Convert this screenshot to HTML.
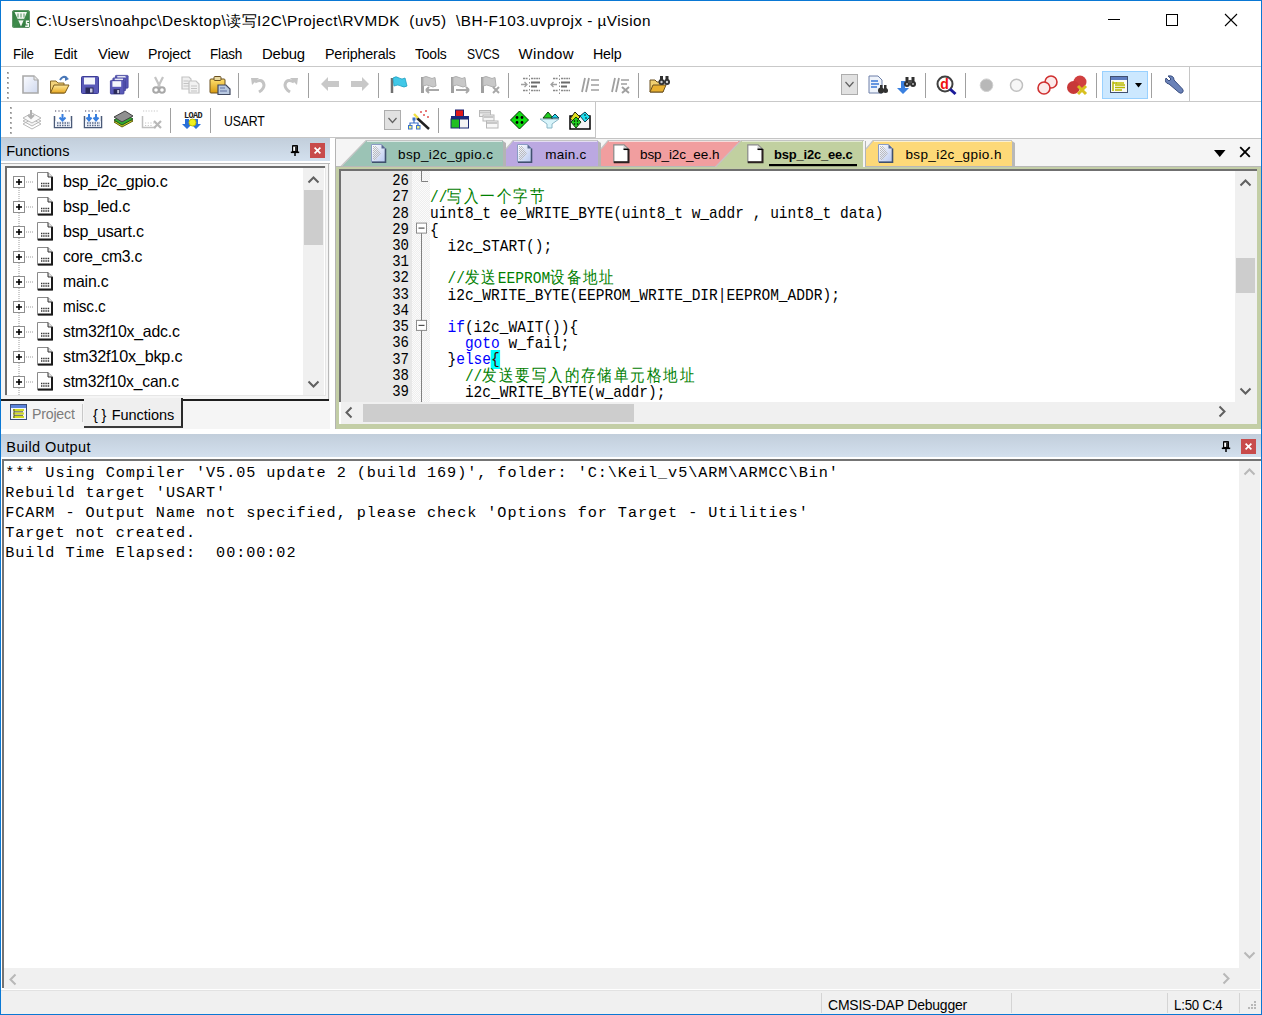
<!DOCTYPE html>
<html><head><meta charset="utf-8"><style>*{margin:0;padding:0;box-sizing:border-box}
html,body{width:1262px;height:1015px;overflow:hidden;background:#fff}
body{position:relative;font-family:"Liberation Sans",sans-serif;color:#000}
.a{position:absolute}
svg.a{overflow:visible}
.t{white-space:pre;line-height:0}
.code{font-family:"Liberation Mono",monospace;font-size:17.0px;letter-spacing:0;transform:scaleX(0.8549);transform-origin:0 0;white-space:pre;line-height:0;color:#000}
.cj{display:inline-block;width:19.242px;letter-spacing:0;font-size:17px;line-height:0}
.ca{}
.lnum{font-family:"Liberation Mono",monospace;font-size:16.5px;letter-spacing:0;transform:scaleX(0.85);transform-origin:100% 0;text-align:right;white-space:pre;line-height:0;color:#000}
.bout{font-family:"Liberation Mono",monospace;font-size:15.2px;letter-spacing:0.930px;white-space:pre;line-height:0;color:#000}
</style></head><body>
<svg class="a" style="left:12px;top:10px;" width="18" height="18" viewBox="0 0 18 18"><defs><linearGradient id="gi" x1="0" y1="0" x2="1" y2="1"><stop offset="0" stop-color="#2f7a3e"/><stop offset="0.5" stop-color="#3f8c4c"/><stop offset="1" stop-color="#2a7038"/></linearGradient></defs>
<rect x="0" y="0" width="18" height="18" rx="2.5" fill="url(#gi)"/><rect x="0.5" y="0.5" width="17" height="17" rx="2.2" fill="none" stroke="#6a9a72" stroke-width="0.8"/>
<path d="M2.5 2 H15 L9 16.5 Z" fill="#f4faf4"/>
<path d="M6 3.5 V7.5 M9 3.5 V7.5 M12 3.5 V7.5" stroke="#7aa882" stroke-width="1.3"/>
<path d="M5 9.6 H13.5" stroke="#4a8a56" stroke-width="1.6"/>
<path d="M13.8 10.5 H17 V12 H15.2 V13 H17 V17 H13.2 V15.5 H15.6 V14.4 H13.8 Z" fill="#f4faf4"/></svg>
<svg class="a" style="left:1100px;top:8px;" width="150" height="24" viewBox="0 0 150 24"><path d="M8 11.5 H20" stroke="#000" stroke-width="1"/>
<rect x="66.5" y="6.5" width="11" height="11" fill="none" stroke="#000" stroke-width="1"/>
<path d="M125 6 L137 18 M137 6 L125 18" stroke="#000" stroke-width="1.1"/></svg>
<div class="a" style="left:1px;top:66px;width:1260px;height:1px;background:#c9c9c9;"></div>
<div class="a" style="left:2px;top:67px;width:1188px;height:35px;background:#fff;border-right:1px solid #c6c6c6;border-bottom:1px solid #c6c6c6"></div>
<div class="a" style="left:1px;top:101px;width:1260px;height:1px;background:#c9c9c9;"></div>
<div class="a" style="left:5px;top:102px;width:591px;height:36px;background:#fff;border-right:1px solid #c6c6c6;border-bottom:1px solid #c6c6c6"></div>
<div class="a" style="left:596px;top:138px;width:665px;height:1px;background:#c9c9c9;"></div>
<div class="a" style="left:1px;top:137px;width:4px;height:1px;background:#c9c9c9;"></div>
<svg class="a" style="left:7px;top:72px;" width="3" height="28" viewBox="0 0 3 28"><rect x="0" y="0" width="2" height="2" fill="#b4b4b4"/><rect x="0" y="0" width="1" height="1" fill="#8c8c8c"/><rect x="0" y="5" width="2" height="2" fill="#b4b4b4"/><rect x="0" y="5" width="1" height="1" fill="#8c8c8c"/><rect x="0" y="10" width="2" height="2" fill="#b4b4b4"/><rect x="0" y="10" width="1" height="1" fill="#8c8c8c"/><rect x="0" y="15" width="2" height="2" fill="#b4b4b4"/><rect x="0" y="15" width="1" height="1" fill="#8c8c8c"/><rect x="0" y="20" width="2" height="2" fill="#b4b4b4"/><rect x="0" y="20" width="1" height="1" fill="#8c8c8c"/><rect x="0" y="25" width="2" height="2" fill="#b4b4b4"/><rect x="0" y="25" width="1" height="1" fill="#8c8c8c"/></svg>
<svg class="a" style="left:10px;top:107px;" width="3" height="28" viewBox="0 0 3 28"><rect x="0" y="0" width="2" height="2" fill="#b4b4b4"/><rect x="0" y="0" width="1" height="1" fill="#8c8c8c"/><rect x="0" y="5" width="2" height="2" fill="#b4b4b4"/><rect x="0" y="5" width="1" height="1" fill="#8c8c8c"/><rect x="0" y="10" width="2" height="2" fill="#b4b4b4"/><rect x="0" y="10" width="1" height="1" fill="#8c8c8c"/><rect x="0" y="15" width="2" height="2" fill="#b4b4b4"/><rect x="0" y="15" width="1" height="1" fill="#8c8c8c"/><rect x="0" y="20" width="2" height="2" fill="#b4b4b4"/><rect x="0" y="20" width="1" height="1" fill="#8c8c8c"/><rect x="0" y="25" width="2" height="2" fill="#b4b4b4"/><rect x="0" y="25" width="1" height="1" fill="#8c8c8c"/></svg>
<div class="a" style="left:138px;top:73px;width:1px;height:25px;background:#a0a0a0;"></div>
<div class="a" style="left:238px;top:73px;width:1px;height:25px;background:#a0a0a0;"></div>
<div class="a" style="left:308px;top:73px;width:1px;height:25px;background:#a0a0a0;"></div>
<div class="a" style="left:378px;top:73px;width:1px;height:25px;background:#a0a0a0;"></div>
<div class="a" style="left:508px;top:73px;width:1px;height:25px;background:#a0a0a0;"></div>
<div class="a" style="left:638px;top:73px;width:1px;height:25px;background:#a0a0a0;"></div>
<div class="a" style="left:925px;top:73px;width:1px;height:25px;background:#a0a0a0;"></div>
<div class="a" style="left:965px;top:73px;width:1px;height:25px;background:#a0a0a0;"></div>
<div class="a" style="left:1096px;top:73px;width:1px;height:25px;background:#a0a0a0;"></div>
<div class="a" style="left:1151px;top:73px;width:1px;height:25px;background:#a0a0a0;"></div>
<div class="a" style="left:170px;top:108px;width:1px;height:25px;background:#a0a0a0;"></div>
<div class="a" style="left:210px;top:108px;width:1px;height:25px;background:#a0a0a0;"></div>
<div class="a" style="left:438px;top:108px;width:1px;height:25px;background:#a0a0a0;"></div>
<svg class="a" style="left:22px;top:75px;" width="17" height="19" viewBox="0 0 17 19"><defs><linearGradient id="gn" x1="0" y1="0" x2="1" y2="1"><stop offset="0" stop-color="#fbfcff"/><stop offset="1" stop-color="#cfd8ee"/></linearGradient></defs>
<path d="M1 1 H12 L16 5 V18 H1 Z" fill="url(#gn)" stroke="#a9a9a9" stroke-width="1.6"/><path d="M12 1 V5 H16" fill="#e8e8e8" stroke="#a9a9a9" stroke-width="1"/></svg>
<svg class="a" style="left:49px;top:75px;" width="22" height="20" viewBox="0 0 22 20"><defs><linearGradient id="go" x1="0" y1="0" x2="0" y2="1"><stop offset="0" stop-color="#ffe89a"/><stop offset="1" stop-color="#e8a820"/></linearGradient></defs>
<path d="M1.5 6 H7 L9 8 H15 V18 H1.5 Z" fill="#f3d27a" stroke="#8a6a2a" stroke-width="1"/>
<path d="M1.5 18 L5 10 H20 L16 18 Z" fill="url(#go)" stroke="#7a5a1a" stroke-width="1"/>
<path d="M11 5 Q14 0 18 3" fill="none" stroke="#4a78b8" stroke-width="2"/><path d="M16 1 L20 4 L16 6 Z" fill="#4a78b8"/></svg>
<svg class="a" style="left:81px;top:76px;" width="18" height="18" viewBox="0 0 18 18"><g transform="translate(0,0) scale(1)"><rect x="0.5" y="0.5" width="17" height="17" rx="1" fill="#5a5ab8" stroke="#3c3c96"/>
<rect x="3" y="1.5" width="11" height="7" fill="#f4f6fb"/><rect x="4.5" y="11.5" width="8" height="6" fill="#2a2a5a"/><rect x="9" y="12.5" width="2.5" height="4" fill="#c8c8e0"/></g></svg>
<svg class="a" style="left:110px;top:75px;" width="20" height="20" viewBox="0 0 20 20"><g><g transform="translate(5,0) scale(0.75)"><rect x="0.5" y="0.5" width="17" height="17" rx="1" fill="#5a5ab8" stroke="#3c3c96"/>
<rect x="3" y="1.5" width="11" height="7" fill="#f4f6fb"/><rect x="4.5" y="11.5" width="8" height="6" fill="#2a2a5a"/><rect x="9" y="12.5" width="2.5" height="4" fill="#c8c8e0"/></g><g transform="translate(2.5,2.5) scale(0.75)"><rect x="0.5" y="0.5" width="17" height="17" rx="1" fill="#5a5ab8" stroke="#3c3c96"/>
<rect x="3" y="1.5" width="11" height="7" fill="#f4f6fb"/><rect x="4.5" y="11.5" width="8" height="6" fill="#2a2a5a"/><rect x="9" y="12.5" width="2.5" height="4" fill="#c8c8e0"/></g><g transform="translate(0,5) scale(0.8)"><rect x="0.5" y="0.5" width="17" height="17" rx="1" fill="#5a5ab8" stroke="#3c3c96"/>
<rect x="3" y="1.5" width="11" height="7" fill="#f4f6fb"/><rect x="4.5" y="11.5" width="8" height="6" fill="#2a2a5a"/><rect x="9" y="12.5" width="2.5" height="4" fill="#c8c8e0"/></g></g></svg>
<svg class="a" style="left:152px;top:76px;" width="14" height="18" viewBox="0 0 14 18"><path d="M3 1 L8 11 M11 1 L6 11" stroke="#c4c4c4" stroke-width="2.2"/><circle cx="4" cy="14" r="2.8" fill="none" stroke="#a8a8a8" stroke-width="2"/><circle cx="10" cy="14" r="2.8" fill="none" stroke="#a8a8a8" stroke-width="2"/></svg>
<svg class="a" style="left:181px;top:76px;" width="20" height="18" viewBox="0 0 20 18"><path d="M1 1 H8 L10 3 V13 H1 Z" fill="#f0f0f0" stroke="#c4c4c4" stroke-width="1.2"/><path d="M2.5 5 H7 M2.5 7.5 H8 M2.5 10 H8" stroke="#c4c4c4"/>
<path d="M8 5 H15 L18 8 V17 H8 Z" fill="#f2f2f2" stroke="#c4c4c4" stroke-width="1.2"/><path d="M10 10 H16 M10 12.5 H16 M10 15 H16" stroke="#c4c4c4"/></svg>
<svg class="a" style="left:209px;top:76px;" width="22" height="19" viewBox="0 0 22 19"><defs><linearGradient id="gp" x1="0" y1="0" x2="0" y2="1"><stop offset="0" stop-color="#ffe070"/><stop offset="1" stop-color="#d89a10"/></linearGradient></defs>
<rect x="1" y="3" width="15" height="14" rx="1" fill="url(#gp)" stroke="#6a5020" stroke-width="1"/><rect x="5" y="0.5" width="7" height="4" rx="1" fill="#e8d8a0" stroke="#6a5020"/>
<path d="M9 9 H17 L21 13 V18.5 H9 Z" fill="#b8c8e0" stroke="#404860" stroke-width="1.2"/><path d="M11 12 H16 M11 15 H18" stroke="#6070a0"/></svg>
<svg class="a" style="left:251px;top:77px;" width="17" height="16" viewBox="0 0 17 16"><path d="M4 5 Q12 1 13 8 Q13 12 8 15" fill="none" stroke="#c4c4c4" stroke-width="3"/><path d="M0 1 L8 1 L1 8 Z" fill="#c4c4c4"/></svg>
<svg class="a" style="left:281px;top:77px;" width="17" height="16" viewBox="0 0 17 16"><path d="M13 5 Q5 1 4 8 Q4 12 9 15" fill="none" stroke="#c4c4c4" stroke-width="3"/><path d="M17 1 L9 1 L16 8 Z" fill="#c4c4c4"/></svg>
<svg class="a" style="left:321px;top:77px;" width="18" height="14" viewBox="0 0 18 14"><path d="M0 7 L7 0 V4 H18 V10 H7 V14 Z" fill="#c8c8c8"/></svg>
<svg class="a" style="left:351px;top:77px;" width="18" height="14" viewBox="0 0 18 14"><path d="M18 7 L11 0 V4 H0 V10 H11 V14 Z" fill="#c8c8c8"/></svg>
<svg class="a" style="left:390px;top:76px;" width="18" height="18" viewBox="0 0 18 18"><path d="M2 2 V17" stroke="#707070" stroke-width="2.5"/><path d="M3 2 Q6 -0.5 9 2 Q12 4 15 2 L17 10 Q14 12 11 10 Q8 8 4 10 Z" fill="#40c8e8" stroke="#20a0c0" stroke-width="0.8"/></svg>
<svg class="a" style="left:420px;top:76px;" width="20" height="18" viewBox="0 0 20 18"><path d="M2.5 1 V17" stroke="#a0a0a0" stroke-width="3"/><path d="M3 1.5 Q6 -0.5 9 1.5 Q12 3.5 15 1.5 L16 10 Q13 12 10 10 Q7 8 3 10 Z" fill="#c8c8c8" stroke="#b0b0b0" stroke-width="1"/><path d="M6 14 H19 M6 14 L9 11 M6 14 L9 17" stroke="#a8a8a8" stroke-width="2"/></svg>
<svg class="a" style="left:450px;top:76px;" width="20" height="18" viewBox="0 0 20 18"><path d="M2.5 1 V17" stroke="#a0a0a0" stroke-width="3"/><path d="M3 1.5 Q6 -0.5 9 1.5 Q12 3.5 15 1.5 L16 10 Q13 12 10 10 Q7 8 3 10 Z" fill="#c8c8c8" stroke="#b0b0b0" stroke-width="1"/><path d="M6 14 H19 M19 14 L16 11 M19 14 L16 17" stroke="#a8a8a8" stroke-width="2"/></svg>
<svg class="a" style="left:480px;top:76px;" width="20" height="18" viewBox="0 0 20 18"><path d="M2.5 1 V17" stroke="#a0a0a0" stroke-width="3"/><path d="M3 1.5 Q6 -0.5 9 1.5 Q12 3.5 15 1.5 L16 10 Q13 12 10 10 Q7 8 3 10 Z" fill="#c8c8c8" stroke="#b0b0b0" stroke-width="1"/><path d="M13 11 L19 17 M19 11 L13 17" stroke="#a8a8a8" stroke-width="2"/></svg>
<svg class="a" style="left:520px;top:75px;" width="21" height="19" viewBox="0 0 21 19"><path d="M3 3.5 H8 M11 3.5 H20 M3 15.5 H8 M11 15.5 H20" stroke="#8a8a8a" stroke-width="1.5" stroke-dasharray="2 0.6"/><path d="M11 7.5 H20 M11 11.5 H17" stroke="#6a6a6a" stroke-width="2.2"/><path d="M9.5 0 V19" stroke="#909090" stroke-width="1" stroke-dasharray="1.5 2"/><path d="M1 9.5 H7 M4.5 7 L7 9.5 L4.5 12" stroke="#a0a0a0" stroke-width="1.3" fill="none"/></svg>
<svg class="a" style="left:550px;top:75px;" width="21" height="19" viewBox="0 0 21 19"><path d="M3 3.5 H8 M11 3.5 H20 M3 15.5 H8 M11 15.5 H20" stroke="#8a8a8a" stroke-width="1.5" stroke-dasharray="2 0.6"/><path d="M11 7.5 H20 M11 11.5 H17" stroke="#6a6a6a" stroke-width="2.2"/><path d="M9.5 0 V19" stroke="#909090" stroke-width="1" stroke-dasharray="1.5 2"/><path d="M1 9.5 H7 M3.5 7 L1 9.5 L3.5 12" stroke="#a0a0a0" stroke-width="1.3" fill="none"/></svg>
<svg class="a" style="left:581px;top:78px;" width="19" height="14" viewBox="0 0 19 14"><path d="M4 0 L1 14 M8 0 L5 14" stroke="#a0a0a0" stroke-width="1.8"/><path d="M10 2 H18 M10 7 H18 M10 12 H18" stroke="#a0a0a0" stroke-width="1.3"/></svg>
<svg class="a" style="left:611px;top:78px;" width="20" height="15" viewBox="0 0 20 15"><path d="M4 0 L1 14 M8 0 L5 14" stroke="#a0a0a0" stroke-width="1.8"/><path d="M10 2 H18 M10 6 H16" stroke="#a0a0a0" stroke-width="1.3"/><path d="M11 9 L18 15 M18 9 L11 15" stroke="#a0a0a0" stroke-width="2"/></svg>
<svg class="a" style="left:649px;top:75px;" width="22" height="18" viewBox="0 0 22 18"><path d="M1 5 H6 L8 7 H14 V17 H1 Z" fill="#f0d070" stroke="#6a5020"/><path d="M1 17 L4 10 H17 L14 17 Z" fill="#e8b030" stroke="#6a5020"/>
<circle cx="12.5" cy="7" r="3" fill="#303030"/><circle cx="18" cy="7" r="3" fill="#303030"/><rect x="11" y="1" width="3" height="4" fill="#303030"/><rect x="16.5" y="1" width="3" height="4" fill="#303030"/><circle cx="12.5" cy="7" r="1.2" fill="#d0d0d0"/><circle cx="18" cy="7" r="1.2" fill="#d0d0d0"/></svg>
<div class="a" style="left:841px;top:74px;width:17px;height:21px;background:#e1e1e1;border:1px solid #adadad"></div>
<svg class="a" style="left:845px;top:81px;" width="9" height="7" viewBox="0 0 9 7"><path d="M0.5 1 L4.5 5.5 L8.5 1" fill="none" stroke="#606060" stroke-width="1.2"/></svg>
<svg class="a" style="left:868px;top:75px;" width="20" height="19" viewBox="0 0 20 19"><path d="M1 1 H10 L14 5 V18 H1 Z" fill="#eef3fb" stroke="#6c7fa8"/><path d="M3 6 H10 M3 9 H11 M3 12 H9" stroke="#3a78d8" stroke-width="1.5"/>
<circle cx="13" cy="15.5" r="3" fill="#303030"/><circle cx="17.5" cy="15.5" r="2.5" fill="#303030"/><rect x="12" y="10" width="2.5" height="4" fill="#303030"/><rect x="16" y="10" width="2.5" height="4" fill="#303030"/></svg>
<svg class="a" style="left:896px;top:75px;" width="21" height="20" viewBox="0 0 21 20"><path d="M5 6 V13 H1 L7 19 L13 13 H9 V6 Z" fill="#3a80e0"/>
<circle cx="11" cy="9" r="3" fill="#303030"/><circle cx="17" cy="9" r="3" fill="#303030"/><rect x="9.5" y="2" width="3" height="5" fill="#303030"/><rect x="15.5" y="2" width="3" height="5" fill="#303030"/><rect x="12" y="5" width="4" height="3" fill="#505050"/><circle cx="11" cy="9" r="1" fill="#bbb"/><circle cx="17" cy="9" r="1" fill="#bbb"/></svg>
<svg class="a" style="left:936px;top:75px;" width="21" height="20" viewBox="0 0 21 20"><circle cx="9" cy="9" r="7.5" fill="#fff" stroke="#404040" stroke-width="2"/><path d="M14 14 L19.5 19" stroke="#1a1a9a" stroke-width="3"/>
<text x="8.5" y="14" font-family="Liberation Sans" font-weight="700" font-size="14" fill="#f01010" text-anchor="middle">d</text></svg>
<svg class="a" style="left:979px;top:78px;" width="16" height="15" viewBox="0 0 16 15"><circle cx="7.5" cy="7.2" r="6.3" fill="#b8b8b8" stroke="#d0d0d0"/></svg>
<svg class="a" style="left:1009px;top:78px;" width="16" height="15" viewBox="0 0 16 15"><circle cx="7.5" cy="7.2" r="6" fill="#f6f6f6" stroke="#c0c0c0" stroke-width="1.5"/></svg>
<svg class="a" style="left:1037px;top:75px;" width="21" height="20" viewBox="0 0 21 20"><circle cx="14" cy="7" r="6" fill="#fbeaea" stroke="#d03030" stroke-width="1.6"/><circle cx="7" cy="13" r="6" fill="#fbeaea" stroke="#d03030" stroke-width="1.6"/></svg>
<svg class="a" style="left:1066px;top:75px;" width="23" height="20" viewBox="0 0 23 20"><circle cx="14" cy="7" r="6.5" fill="#d04040"/><circle cx="7.5" cy="12.5" r="6.5" fill="#c83838"/><path d="M12 11 L20 19 M20 11 L12 19" stroke="#d8c020" stroke-width="3"/></svg>
<div class="a" style="left:1102px;top:71px;width:46px;height:28px;background:#cce8ff;border:1px solid #99d1ff"></div>
<svg class="a" style="left:1110px;top:76px;" width="19" height="17" viewBox="0 0 19 17"><rect x="0.5" y="0.5" width="17" height="16" fill="#fbfbf6" stroke="#405070"/><rect x="1" y="1" width="16" height="3" fill="#5c7cc0"/>
<path d="M3 5.5 V15 M3 7 H7 M5 9 H15 M5 11.5 H15 M5 14 H12" stroke="#b8b800" stroke-width="1.5"/><path d="M6 7 H14" stroke="#c0c000" stroke-width="1.5"/></svg>
<svg class="a" style="left:1135px;top:83px;" width="8" height="5" viewBox="0 0 8 5"><path d="M0 0 H7 L3.5 4.5 Z" fill="#000"/></svg>
<svg class="a" style="left:1164px;top:74px;" width="21" height="20" viewBox="0 0 21 20"><path d="M4 2 L7 5 L5 7 L2 4 Q0 9 5 10 L15 18.5 Q17 20 18.5 18.5 Q20 17 18.5 15 L10 6 Q10 1 4 2 Z" fill="#6a82b8" stroke="#3a4e80" stroke-width="1"/></svg>
<svg class="a" style="left:22px;top:109px;" width="21" height="21" viewBox="0 0 21 21"><path d="M1 12 L10 7 L19 12 L10 17 Z" fill="#f4f4f4" stroke="#b8b8b8"/><path d="M1 15 L10 10 L19 15 L10 20 Z" fill="none" stroke="#b8b8b8"/>
<path d="M1 9 L10 4 L19 9 L10 14 Z" fill="#fafafa" stroke="#b8b8b8"/><path d="M9 1 V9 M6 6 L9 9 L12 6" stroke="#b0b0b0" stroke-width="2" fill="none"/></svg>
<svg class="a" style="left:53px;top:109px;" width="20" height="20" viewBox="0 0 20 20"><path d="M1.5 7 V18.5 H18.5 V7" fill="none" stroke="#4a5a78" stroke-width="1.5"/><rect x="2" y="12" width="16" height="6" fill="#eef2fa"/>
<path d="M4 14 H17 M4 16.5 H17" stroke="#5a6a88" stroke-width="1.3" stroke-dasharray="1.5 1"/><path d="M2 2 H18" stroke="#404060" stroke-width="1.2" stroke-dasharray="1.2 2.2"/><path d="M9.5 5 V11 M6.5 8.5 L9.5 11.5 L12.5 8.5" stroke="#3a80e0" stroke-width="2" fill="none"/></svg>
<svg class="a" style="left:83px;top:109px;" width="20" height="20" viewBox="0 0 20 20"><path d="M1.5 7 V18.5 H18.5 V7" fill="none" stroke="#4a5a78" stroke-width="1.5"/><rect x="2" y="12" width="16" height="6" fill="#eef2fa"/>
<path d="M4 14 H17 M4 16.5 H17" stroke="#5a6a88" stroke-width="1.3" stroke-dasharray="1.5 1"/><path d="M2 2 H18" stroke="#404060" stroke-width="1.2" stroke-dasharray="1.2 2.2"/><path d="M6 5 V11 M3.5 8.5 L6 11.5 L8.5 8.5 M13 5 V11 M10.5 8.5 L13 11.5 L15.5 8.5" stroke="#3a80e0" stroke-width="2" fill="none"/></svg>
<svg class="a" style="left:113px;top:110px;" width="21" height="20" viewBox="0 0 21 20"><path d="M1 12 L12 6 L20 11 L9 17 Z" fill="#c8d020" stroke="#606010"/><path d="M1 10 L12 4 L20 9 L9 15 Z" fill="#30b030" stroke="#205020"/>
<path d="M1 7 L12 1 L20 6 L9 12 Z" fill="#909090" stroke="#404040"/></svg>
<svg class="a" style="left:141px;top:109px;" width="22" height="21" viewBox="0 0 22 21"><path d="M1.5 7 V18.5 H15" fill="none" stroke="#c0c0c0" stroke-width="1.5"/><path d="M2 2 H18 M4 14 H14 M4 16.5 H12" stroke="#c8c8c8" stroke-width="1.2" stroke-dasharray="1.2 1.5"/>
<path d="M13 12 L20 19 M20 12 L13 19" stroke="#b8b8b8" stroke-width="2.2"/></svg>
<svg class="a" style="left:182px;top:110px;" width="22" height="20" viewBox="0 0 22 20"><text x="11" y="7.5" font-family="Liberation Mono" font-weight="700" font-size="8.5" fill="#202020" text-anchor="middle" letter-spacing="-0.6">LOAD</text>
<path d="M3 9 V14 H0 L5 19 L10 14 H7 V9 Z M12 9 V14 H9 L14 19 L19 14 H16 V9 Z" fill="#2a70d8"/><circle cx="10.5" cy="12.5" r="3.5" fill="#f0f020" stroke="#c0c000"/></svg>
<div class="a" style="left:384px;top:110px;width:17px;height:20px;background:#e1e1e1;border:1px solid #adadad"></div>
<svg class="a" style="left:388px;top:117px;" width="9" height="7" viewBox="0 0 9 7"><path d="M0.5 1 L4.5 5.5 L8.5 1" fill="none" stroke="#606060" stroke-width="1.2"/></svg>
<svg class="a" style="left:408px;top:109px;" width="23" height="21" viewBox="0 0 23 21"><path d="M9 9 L21 20" stroke="#202020" stroke-width="2.4"/><path d="M6 5 L10 9" stroke="#f0e040" stroke-width="2.4"/>
<circle cx="13" cy="3" r="1" fill="#e05050"/><circle cx="18" cy="2" r="1" fill="#e05050"/><circle cx="16" cy="6" r="1" fill="#e05050"/><circle cx="20" cy="8" r="1" fill="#e05050"/>
<path d="M6 10 V14 M2 18 V14 H10 V18" fill="none" stroke="#3a70c8" stroke-width="1.2"/><rect x="4.5" y="8.5" width="3" height="3" fill="#3a70c8"/><rect x="0.5" y="16.5" width="3.5" height="3.5" fill="#f0f080" stroke="#3a70c8"/><rect x="8.5" y="16.5" width="3.5" height="3.5" fill="#f0f080" stroke="#3a70c8"/></svg>
<svg class="a" style="left:450px;top:109px;" width="20" height="21" viewBox="0 0 20 21"><rect x="5.5" y="1" width="8" height="8" fill="#e01818" stroke="#1a2070"/><rect x="1" y="7" width="18" height="3" fill="#1a2a80"/>
<rect x="1" y="10" width="8.5" height="9" fill="#20c020" stroke="#1a2a70"/><rect x="9.5" y="10" width="9" height="9" fill="#f4f4f4" stroke="#1a2a70"/></svg>
<svg class="a" style="left:479px;top:110px;" width="20" height="19" viewBox="0 0 20 19"><rect x="0.5" y="0.5" width="11" height="6" fill="#f0f0f0" stroke="#b8b8b8"/><rect x="4" y="5" width="11" height="6" fill="#f4f4f4" stroke="#b8b8b8"/><rect x="7.5" y="11" width="11.5" height="7" fill="#f8f8f8" stroke="#b8b8b8"/>
<path d="M1 2.5 H11 M4.5 7 H14.5 M8 13 H18.5" stroke="#c8c8c8" stroke-width="2"/></svg>
<svg class="a" style="left:510px;top:110px;" width="19" height="20" viewBox="0 0 19 20"><path d="M9.5 1 L18.5 10 L9.5 19 L0.5 10 Z" fill="#10e010" stroke="#083008" stroke-width="1"/><circle cx="7" cy="7.5" r="1.4" fill="#000"/><circle cx="12" cy="7.5" r="1.4" fill="#000"/><circle cx="7" cy="12.5" r="1.4" fill="#000"/><circle cx="12" cy="12.5" r="1.4" fill="#000"/></svg>
<svg class="a" style="left:539px;top:109px;" width="21" height="20" viewBox="0 0 21 20"><path d="M1 10 H20 L13 15 V19 H8 V15 Z" fill="#d8f4fa" stroke="#8ab8c8"/><path d="M4 9 L9 3 L14 9 Z" fill="#20d020" stroke="#104010"/><path d="M12 9 L16 5 L20 9 Z" fill="#20d8f0" stroke="#104050"/></svg>
<svg class="a" style="left:569px;top:109px;" width="22" height="21" viewBox="0 0 22 21"><rect x="1" y="7" width="20" height="13" fill="#f6f6f6" stroke="#000" stroke-width="1.5"/><path d="M1 10 L6 3 L11 8 L6 13 Z" fill="#e0e020" stroke="#202010"/>
<path d="M11 7 L16 3 L21 8 L16 13 Z" fill="#20e0f0" stroke="#104050"/><path d="M7 8 L12 13 L7 19 L2 13 Z" fill="#20d020" stroke="#104010"/><circle cx="5.5" cy="12" r="0.8" fill="#000"/><circle cx="8.5" cy="12" r="0.8" fill="#000"/><circle cx="5.5" cy="15" r="0.8" fill="#000"/><circle cx="8.5" cy="15" r="0.8" fill="#000"/><circle cx="16" cy="6" r="0.8" fill="#000"/><circle cx="17" cy="9" r="0.8" fill="#000"/></svg>
<div class="a" style="left:1px;top:138px;width:329px;height:291px;background:#f5f5f5;"></div>
<div class="a" style="left:1px;top:138px;width:329px;height:23px;background:linear-gradient(#c2cedb,#d3e0ee);"></div>
<div class="a" style="left:1px;top:161px;width:329px;height:2px;background:#fff;"></div>
<svg class="a" style="left:290px;top:145px;" width="10" height="12" viewBox="0 0 10 12"><path d="M2.5 0.8 H7.5" stroke="#000" stroke-width="1.4"/><rect x="2.6" y="1" width="4.8" height="5.5" fill="#fff" stroke="#000" stroke-width="1.2"/><rect x="5.2" y="1.5" width="1.6" height="5" fill="#000"/><path d="M0.8 7.3 H9.2" stroke="#000" stroke-width="1.6"/><path d="M5 7.5 V11" stroke="#000" stroke-width="1.5"/></svg>
<div class="a" style="left:310px;top:143px;width:15px;height:15px;background:#c84b4b;"></div>
<svg class="a" style="left:310px;top:143px;" width="15" height="15" viewBox="0 0 15 15"><path d="M4.6 4.6 L10.4 10.4 M10.4 4.6 L4.6 10.4" stroke="#fff" stroke-width="1.7"/></svg>
<div class="a" style="left:1px;top:163px;width:329px;height:1px;background:#b9b9b9;"></div>
<div class="a" style="left:328px;top:163px;width:1px;height:236px;background:#b9b9b9;"></div>
<div class="a" style="left:5px;top:166px;width:320px;height:230px;background:#fff;border-left:2px solid #6d6d6d;border-top:2px solid #6d6d6d"></div>
<div class="a" style="left:5px;top:395px;width:321px;height:1px;background:#e6e6e6;"></div>
<div class="a" style="left:325px;top:166px;width:1px;height:230px;background:#e6e6e6;"></div>
<div class="a" style="left:303px;top:168px;width:21px;height:227px;background:#f0f0f0;"></div>
<div class="a" style="left:304px;top:190px;width:19px;height:55px;background:#cdcdcd;"></div>
<svg class="a" style="left:307px;top:176px;" width="13" height="8" viewBox="0 0 13 8"><path d="M1.5 6.5 L6.5 1.5 L11.5 6.5" fill="none" stroke="#606060" stroke-width="2"/></svg>
<svg class="a" style="left:307px;top:380px;" width="13" height="8" viewBox="0 0 13 8"><path d="M1.5 1.5 L6.5 6.5 L11.5 1.5" fill="none" stroke="#606060" stroke-width="2"/></svg>
<svg class="a" style="left:13px;top:176px;" width="12" height="12" viewBox="0 0 12 12"><rect x="0.5" y="0.5" width="11" height="11" fill="#fff" stroke="#8f8f8f" stroke-width="1"/><path d="M3 6 H9 M6 3 V9" stroke="#000" stroke-width="1.6"/></svg>
<svg class="a" style="left:26px;top:181px;" width="8" height="2" viewBox="0 0 8 2"><path d="M0 1 H7" stroke="#9a9a9a" stroke-width="1" stroke-dasharray="1 1"/></svg>
<svg class="a" style="left:18px;top:188px;" width="2" height="14" viewBox="0 0 2 14"><path d="M1 0 V14" stroke="#9a9a9a" stroke-width="1" stroke-dasharray="1 1"/></svg>
<svg class="a" style="left:37px;top:172px;" width="17" height="19" viewBox="0 0 17 19"><path d="M0.5 0.5 H11 L15.5 5 V18 H0.5 Z" fill="#fff" stroke="#8a8a8a" stroke-width="1"/>
<path d="M15 5 V17.5 H1" fill="none" stroke="#1a1a1a" stroke-width="2"/><path d="M11 0.5 V5 H15.5" fill="#ddd" stroke="#333" stroke-width="1"/>
<path d="M4 11.5 H13 M4 14 H13" stroke="#333" stroke-width="1.3" stroke-dasharray="1.4 0.8"/></svg>
<svg class="a" style="left:13px;top:201px;" width="12" height="12" viewBox="0 0 12 12"><rect x="0.5" y="0.5" width="11" height="11" fill="#fff" stroke="#8f8f8f" stroke-width="1"/><path d="M3 6 H9 M6 3 V9" stroke="#000" stroke-width="1.6"/></svg>
<svg class="a" style="left:26px;top:206px;" width="8" height="2" viewBox="0 0 8 2"><path d="M0 1 H7" stroke="#9a9a9a" stroke-width="1" stroke-dasharray="1 1"/></svg>
<svg class="a" style="left:18px;top:213px;" width="2" height="14" viewBox="0 0 2 14"><path d="M1 0 V14" stroke="#9a9a9a" stroke-width="1" stroke-dasharray="1 1"/></svg>
<svg class="a" style="left:37px;top:197px;" width="17" height="19" viewBox="0 0 17 19"><path d="M0.5 0.5 H11 L15.5 5 V18 H0.5 Z" fill="#fff" stroke="#8a8a8a" stroke-width="1"/>
<path d="M15 5 V17.5 H1" fill="none" stroke="#1a1a1a" stroke-width="2"/><path d="M11 0.5 V5 H15.5" fill="#ddd" stroke="#333" stroke-width="1"/>
<path d="M4 11.5 H13 M4 14 H13" stroke="#333" stroke-width="1.3" stroke-dasharray="1.4 0.8"/></svg>
<svg class="a" style="left:13px;top:226px;" width="12" height="12" viewBox="0 0 12 12"><rect x="0.5" y="0.5" width="11" height="11" fill="#fff" stroke="#8f8f8f" stroke-width="1"/><path d="M3 6 H9 M6 3 V9" stroke="#000" stroke-width="1.6"/></svg>
<svg class="a" style="left:26px;top:231px;" width="8" height="2" viewBox="0 0 8 2"><path d="M0 1 H7" stroke="#9a9a9a" stroke-width="1" stroke-dasharray="1 1"/></svg>
<svg class="a" style="left:18px;top:238px;" width="2" height="14" viewBox="0 0 2 14"><path d="M1 0 V14" stroke="#9a9a9a" stroke-width="1" stroke-dasharray="1 1"/></svg>
<svg class="a" style="left:37px;top:222px;" width="17" height="19" viewBox="0 0 17 19"><path d="M0.5 0.5 H11 L15.5 5 V18 H0.5 Z" fill="#fff" stroke="#8a8a8a" stroke-width="1"/>
<path d="M15 5 V17.5 H1" fill="none" stroke="#1a1a1a" stroke-width="2"/><path d="M11 0.5 V5 H15.5" fill="#ddd" stroke="#333" stroke-width="1"/>
<path d="M4 11.5 H13 M4 14 H13" stroke="#333" stroke-width="1.3" stroke-dasharray="1.4 0.8"/></svg>
<svg class="a" style="left:13px;top:251px;" width="12" height="12" viewBox="0 0 12 12"><rect x="0.5" y="0.5" width="11" height="11" fill="#fff" stroke="#8f8f8f" stroke-width="1"/><path d="M3 6 H9 M6 3 V9" stroke="#000" stroke-width="1.6"/></svg>
<svg class="a" style="left:26px;top:256px;" width="8" height="2" viewBox="0 0 8 2"><path d="M0 1 H7" stroke="#9a9a9a" stroke-width="1" stroke-dasharray="1 1"/></svg>
<svg class="a" style="left:18px;top:263px;" width="2" height="14" viewBox="0 0 2 14"><path d="M1 0 V14" stroke="#9a9a9a" stroke-width="1" stroke-dasharray="1 1"/></svg>
<svg class="a" style="left:37px;top:247px;" width="17" height="19" viewBox="0 0 17 19"><path d="M0.5 0.5 H11 L15.5 5 V18 H0.5 Z" fill="#fff" stroke="#8a8a8a" stroke-width="1"/>
<path d="M15 5 V17.5 H1" fill="none" stroke="#1a1a1a" stroke-width="2"/><path d="M11 0.5 V5 H15.5" fill="#ddd" stroke="#333" stroke-width="1"/>
<path d="M4 11.5 H13 M4 14 H13" stroke="#333" stroke-width="1.3" stroke-dasharray="1.4 0.8"/></svg>
<svg class="a" style="left:13px;top:276px;" width="12" height="12" viewBox="0 0 12 12"><rect x="0.5" y="0.5" width="11" height="11" fill="#fff" stroke="#8f8f8f" stroke-width="1"/><path d="M3 6 H9 M6 3 V9" stroke="#000" stroke-width="1.6"/></svg>
<svg class="a" style="left:26px;top:281px;" width="8" height="2" viewBox="0 0 8 2"><path d="M0 1 H7" stroke="#9a9a9a" stroke-width="1" stroke-dasharray="1 1"/></svg>
<svg class="a" style="left:18px;top:288px;" width="2" height="14" viewBox="0 0 2 14"><path d="M1 0 V14" stroke="#9a9a9a" stroke-width="1" stroke-dasharray="1 1"/></svg>
<svg class="a" style="left:37px;top:272px;" width="17" height="19" viewBox="0 0 17 19"><path d="M0.5 0.5 H11 L15.5 5 V18 H0.5 Z" fill="#fff" stroke="#8a8a8a" stroke-width="1"/>
<path d="M15 5 V17.5 H1" fill="none" stroke="#1a1a1a" stroke-width="2"/><path d="M11 0.5 V5 H15.5" fill="#ddd" stroke="#333" stroke-width="1"/>
<path d="M4 11.5 H13 M4 14 H13" stroke="#333" stroke-width="1.3" stroke-dasharray="1.4 0.8"/></svg>
<svg class="a" style="left:13px;top:301px;" width="12" height="12" viewBox="0 0 12 12"><rect x="0.5" y="0.5" width="11" height="11" fill="#fff" stroke="#8f8f8f" stroke-width="1"/><path d="M3 6 H9 M6 3 V9" stroke="#000" stroke-width="1.6"/></svg>
<svg class="a" style="left:26px;top:306px;" width="8" height="2" viewBox="0 0 8 2"><path d="M0 1 H7" stroke="#9a9a9a" stroke-width="1" stroke-dasharray="1 1"/></svg>
<svg class="a" style="left:18px;top:313px;" width="2" height="14" viewBox="0 0 2 14"><path d="M1 0 V14" stroke="#9a9a9a" stroke-width="1" stroke-dasharray="1 1"/></svg>
<svg class="a" style="left:37px;top:297px;" width="17" height="19" viewBox="0 0 17 19"><path d="M0.5 0.5 H11 L15.5 5 V18 H0.5 Z" fill="#fff" stroke="#8a8a8a" stroke-width="1"/>
<path d="M15 5 V17.5 H1" fill="none" stroke="#1a1a1a" stroke-width="2"/><path d="M11 0.5 V5 H15.5" fill="#ddd" stroke="#333" stroke-width="1"/>
<path d="M4 11.5 H13 M4 14 H13" stroke="#333" stroke-width="1.3" stroke-dasharray="1.4 0.8"/></svg>
<svg class="a" style="left:13px;top:326px;" width="12" height="12" viewBox="0 0 12 12"><rect x="0.5" y="0.5" width="11" height="11" fill="#fff" stroke="#8f8f8f" stroke-width="1"/><path d="M3 6 H9 M6 3 V9" stroke="#000" stroke-width="1.6"/></svg>
<svg class="a" style="left:26px;top:331px;" width="8" height="2" viewBox="0 0 8 2"><path d="M0 1 H7" stroke="#9a9a9a" stroke-width="1" stroke-dasharray="1 1"/></svg>
<svg class="a" style="left:18px;top:338px;" width="2" height="14" viewBox="0 0 2 14"><path d="M1 0 V14" stroke="#9a9a9a" stroke-width="1" stroke-dasharray="1 1"/></svg>
<svg class="a" style="left:37px;top:322px;" width="17" height="19" viewBox="0 0 17 19"><path d="M0.5 0.5 H11 L15.5 5 V18 H0.5 Z" fill="#fff" stroke="#8a8a8a" stroke-width="1"/>
<path d="M15 5 V17.5 H1" fill="none" stroke="#1a1a1a" stroke-width="2"/><path d="M11 0.5 V5 H15.5" fill="#ddd" stroke="#333" stroke-width="1"/>
<path d="M4 11.5 H13 M4 14 H13" stroke="#333" stroke-width="1.3" stroke-dasharray="1.4 0.8"/></svg>
<svg class="a" style="left:13px;top:351px;" width="12" height="12" viewBox="0 0 12 12"><rect x="0.5" y="0.5" width="11" height="11" fill="#fff" stroke="#8f8f8f" stroke-width="1"/><path d="M3 6 H9 M6 3 V9" stroke="#000" stroke-width="1.6"/></svg>
<svg class="a" style="left:26px;top:356px;" width="8" height="2" viewBox="0 0 8 2"><path d="M0 1 H7" stroke="#9a9a9a" stroke-width="1" stroke-dasharray="1 1"/></svg>
<svg class="a" style="left:18px;top:363px;" width="2" height="14" viewBox="0 0 2 14"><path d="M1 0 V14" stroke="#9a9a9a" stroke-width="1" stroke-dasharray="1 1"/></svg>
<svg class="a" style="left:37px;top:347px;" width="17" height="19" viewBox="0 0 17 19"><path d="M0.5 0.5 H11 L15.5 5 V18 H0.5 Z" fill="#fff" stroke="#8a8a8a" stroke-width="1"/>
<path d="M15 5 V17.5 H1" fill="none" stroke="#1a1a1a" stroke-width="2"/><path d="M11 0.5 V5 H15.5" fill="#ddd" stroke="#333" stroke-width="1"/>
<path d="M4 11.5 H13 M4 14 H13" stroke="#333" stroke-width="1.3" stroke-dasharray="1.4 0.8"/></svg>
<svg class="a" style="left:13px;top:376px;" width="12" height="12" viewBox="0 0 12 12"><rect x="0.5" y="0.5" width="11" height="11" fill="#fff" stroke="#8f8f8f" stroke-width="1"/><path d="M3 6 H9 M6 3 V9" stroke="#000" stroke-width="1.6"/></svg>
<svg class="a" style="left:26px;top:381px;" width="8" height="2" viewBox="0 0 8 2"><path d="M0 1 H7" stroke="#9a9a9a" stroke-width="1" stroke-dasharray="1 1"/></svg>
<svg class="a" style="left:18px;top:388px;" width="2" height="8" viewBox="0 0 2 8"><path d="M1 0 V8" stroke="#9a9a9a" stroke-width="1" stroke-dasharray="1 1"/></svg>
<svg class="a" style="left:37px;top:372px;" width="17" height="19" viewBox="0 0 17 19"><path d="M0.5 0.5 H11 L15.5 5 V18 H0.5 Z" fill="#fff" stroke="#8a8a8a" stroke-width="1"/>
<path d="M15 5 V17.5 H1" fill="none" stroke="#1a1a1a" stroke-width="2"/><path d="M11 0.5 V5 H15.5" fill="#ddd" stroke="#333" stroke-width="1"/>
<path d="M4 11.5 H13 M4 14 H13" stroke="#333" stroke-width="1.3" stroke-dasharray="1.4 0.8"/></svg>
<div class="a" style="left:1px;top:399px;width:83px;height:2px;background:#1e1e1e;"></div>
<div class="a" style="left:183px;top:399px;width:146px;height:2px;background:#1e1e1e;"></div>
<div class="a" style="left:84px;top:398px;width:99px;height:30px;background:#efefef;border-right:2px solid #2a2a2a;border-bottom:2px solid #3a3a3a"></div>
<div class="a" style="left:82px;top:404px;width:1px;height:18px;background:#c8c8c8;"></div>
<svg class="a" style="left:10px;top:404px;" width="17" height="16" viewBox="0 0 17 16"><rect x="0.5" y="0.5" width="16" height="15" fill="#f4f6fb" stroke="#3a4c78"/><rect x="1" y="1" width="15" height="3" fill="#5a82d8"/>
<rect x="3" y="5" width="11" height="2" fill="#d4dc20"/><rect x="3" y="8.5" width="11" height="2" fill="#d4dc20"/><rect x="3" y="12" width="11" height="2" fill="#d4dc20"/>
<path d="M4 5 V14 M4 7.8 H13 M4 11.3 H13" stroke="#4a4a30" stroke-width="0.9"/></svg>
<div class="a" style="left:330px;top:138px;width:5px;height:296px;background:#fff;"></div>
<div class="a" style="left:335px;top:138px;width:926px;height:291px;background:#f5f5f5;border-left:1px solid #b4b4b4"></div>
<div class="a" style="left:335px;top:138px;width:926px;height:1px;background:#c4c4c4;"></div>
<svg class="a" style="left:335px;top:136px;" width="926" height="34" viewBox="0 0 926 34"><polygon points="6,31 31,5 168,5 168,31" fill="#9bc3b5"/><polyline points="6,30.5 31,4.5 168,4.5" fill="none" stroke="#c4c4c4" stroke-width="1.2"/><polyline points="32,5.5 167,5.5" fill="none" stroke="#dbe8e4" stroke-width="1"/><polygon points="168,5 171,7 171,31 168,31" fill="#b4b4b4"/><polygon points="171,31 171,13 178,5 263,5 263,31" fill="#bba8e1"/><polyline points="171,13 178,4.5 263,4.5" fill="none" stroke="#c4c4c4" stroke-width="1.2"/><polyline points="179,5.5 262,5.5" fill="none" stroke="#e4dcf2" stroke-width="1"/><polygon points="263,5 266,7 266,31 263,31" fill="#b4b4b4"/><polygon points="266,31 266,13 273,5 405,5 405,31" fill="#f19e9f"/><polyline points="266,13 273,4.5 405,4.5" fill="none" stroke="#c4c4c4" stroke-width="1.2"/><polyline points="274,5.5 403,5.5" fill="none" stroke="#f6dcdc" stroke-width="1"/><polygon points="531,31 531,13 538,5 677,5 677,31" fill="#fdd978"/><polyline points="531,13 538,4.5 677,4.5" fill="none" stroke="#c4c4c4" stroke-width="1.2"/><polyline points="539,5.5 676,5.5" fill="none" stroke="#fbf0d0" stroke-width="1"/><polygon points="677,5 680,7 680,31 677,31" fill="#b8b8b8"/><polygon points="380,32 406,5 528,5 528,32" fill="#c1d0a0"/><polyline points="380,31.5 406,4.5 529,4.5" fill="none" stroke="#c4c4c4" stroke-width="1.2"/><polyline points="407,5.5 527,5.5" fill="none" stroke="#e2ead2" stroke-width="1"/><polygon points="528,5 530,5 530,31 528,31" fill="#f4f4f4"/><polygon points="530,5 531,5 531,31 530,31" fill="#b4b4b4"/><rect x="434" y="28" width="88" height="2.2" fill="#000"/></svg>
<div class="a" style="left:336px;top:166px;width:379px;height:1px;background:#b8b8b8;"></div>
<div class="a" style="left:866px;top:166px;width:395px;height:1px;background:#b8b8b8;"></div>
<svg class="a" style="left:371px;top:144px;" width="16" height="19" viewBox="0 0 16 19"><defs><linearGradient id="gdb" x1="0" y1="0" x2="1" y2="1"><stop offset="0" stop-color="#ffffff"/><stop offset="1" stop-color="#b8c8f0"/></linearGradient></defs>
<path d="M0.5 0.5 H10.5 L14.5 4.5 V18 H0.5 Z" fill="url(#gdb)" stroke="#8a9cc4" stroke-width="1"/><path d="M14.5 4.5 V18.2 H1" fill="none" stroke="#40506e" stroke-width="1.6"/>
<path d="M10.5 0.5 V4.5 H14.5 Z" fill="#5a6a90"/><defs><pattern id="dchk" width="2" height="2" patternUnits="userSpaceOnUse"><rect x="0" y="0" width="1" height="1" fill="#bcbcbc"/><rect x="1" y="1" width="1" height="1" fill="#bcbcbc"/></pattern></defs><path d="M2 2 H5 L10 9 L5 16 H2 Z" fill="url(#dchk)"/></svg>
<svg class="a" style="left:517px;top:144px;" width="16" height="19" viewBox="0 0 16 19"><defs><linearGradient id="gdb" x1="0" y1="0" x2="1" y2="1"><stop offset="0" stop-color="#ffffff"/><stop offset="1" stop-color="#b8c8f0"/></linearGradient></defs>
<path d="M0.5 0.5 H10.5 L14.5 4.5 V18 H0.5 Z" fill="url(#gdb)" stroke="#8a9cc4" stroke-width="1"/><path d="M14.5 4.5 V18.2 H1" fill="none" stroke="#40506e" stroke-width="1.6"/>
<path d="M10.5 0.5 V4.5 H14.5 Z" fill="#5a6a90"/><defs><pattern id="dchk" width="2" height="2" patternUnits="userSpaceOnUse"><rect x="0" y="0" width="1" height="1" fill="#bcbcbc"/><rect x="1" y="1" width="1" height="1" fill="#bcbcbc"/></pattern></defs><path d="M2 2 H5 L10 9 L5 16 H2 Z" fill="url(#dchk)"/></svg>
<svg class="a" style="left:613px;top:144px;" width="17" height="19" viewBox="0 0 17 19"><path d="M0.8 0.8 H11 L15.5 5 V18 H0.8 Z" fill="#fff" stroke="#888" stroke-width="1.2"/><path d="M15.5 5 V18.2 H0.8" fill="none" stroke="#2a2020" stroke-width="2"/><path d="M10.5 1 L15 5.5 H10.5 Z" fill="#ccc"/><path d="M10.5 5.3 H15.5" stroke="#000" stroke-width="1.5"/></svg>
<svg class="a" style="left:747px;top:144px;" width="17" height="19" viewBox="0 0 17 19"><path d="M0.8 0.8 H11 L15.5 5 V18 H0.8 Z" fill="#fff" stroke="#888" stroke-width="1.2"/><path d="M15.5 5 V18.2 H0.8" fill="none" stroke="#2a2020" stroke-width="2"/><path d="M10.5 1 L15 5.5 H10.5 Z" fill="#ccc"/><path d="M10.5 5.3 H15.5" stroke="#000" stroke-width="1.5"/></svg>
<svg class="a" style="left:878px;top:144px;" width="16" height="19" viewBox="0 0 16 19"><defs><linearGradient id="gdb" x1="0" y1="0" x2="1" y2="1"><stop offset="0" stop-color="#ffffff"/><stop offset="1" stop-color="#b8c8f0"/></linearGradient></defs>
<path d="M0.5 0.5 H10.5 L14.5 4.5 V18 H0.5 Z" fill="url(#gdb)" stroke="#8a9cc4" stroke-width="1"/><path d="M14.5 4.5 V18.2 H1" fill="none" stroke="#40506e" stroke-width="1.6"/>
<path d="M10.5 0.5 V4.5 H14.5 Z" fill="#5a6a90"/><defs><pattern id="dchk" width="2" height="2" patternUnits="userSpaceOnUse"><rect x="0" y="0" width="1" height="1" fill="#bcbcbc"/><rect x="1" y="1" width="1" height="1" fill="#bcbcbc"/></pattern></defs><path d="M2 2 H5 L10 9 L5 16 H2 Z" fill="url(#dchk)"/></svg>
<svg class="a" style="left:1214px;top:150px;" width="12" height="8" viewBox="0 0 12 8"><path d="M0 0 H11.5 L5.75 7 Z" fill="#000"/></svg>
<svg class="a" style="left:1239px;top:146px;" width="12" height="12" viewBox="0 0 12 12"><path d="M1.2 1.2 L10.8 10.8 M10.8 1.2 L1.2 10.8" stroke="#000" stroke-width="1.8"/></svg>
<div class="a" style="left:336px;top:167px;width:925px;height:262px;background:#c3cea6;"></div>
<div class="a" style="left:335px;top:167px;width:1px;height:262px;background:#b4b4b4;"></div>
<div class="a" style="left:339px;top:169px;width:918px;height:255px;background:#fff;"></div>
<div class="a" style="left:339px;top:169px;width:918px;height:2px;background:#707070;"></div>
<div class="a" style="left:339px;top:169px;width:2px;height:233px;background:#707070;"></div>
<div class="a" style="left:341px;top:171px;width:71px;height:231px;background:#e8e8e8;"></div>
<svg class="a" style="left:412px;top:171px;" width="18" height="231" viewBox="0 0 18 231"><defs><pattern id="chk" width="2" height="2" patternUnits="userSpaceOnUse"><rect width="2" height="2" fill="#fbfbfb"/><rect width="1" height="1" fill="#eeeeee"/><rect x="1" y="1" width="1" height="1" fill="#eeeeee"/></pattern></defs><rect width="18" height="231" fill="url(#chk)"/></svg>
<div class="a" style="left:1235px;top:171px;width:22px;height:231px;background:#f0f0f0;"></div>
<div class="a" style="left:1236px;top:258px;width:19px;height:35px;background:#cdcdcd;"></div>
<svg class="a" style="left:1239px;top:179px;" width="13" height="8" viewBox="0 0 13 8"><path d="M1.5 6.5 L6.5 1.5 L11.5 6.5" fill="none" stroke="#606060" stroke-width="2"/></svg>
<svg class="a" style="left:1239px;top:387px;" width="13" height="8" viewBox="0 0 13 8"><path d="M1.5 1.5 L6.5 6.5 L11.5 1.5" fill="none" stroke="#606060" stroke-width="2"/></svg>
<div class="a" style="left:341px;top:402px;width:916px;height:22px;background:#f0f0f0;"></div>
<div class="a" style="left:363px;top:404px;width:271px;height:18px;background:#cdcdcd;"></div>
<svg class="a" style="left:345px;top:406px;" width="8" height="13" viewBox="0 0 8 13"><path d="M6.5 1.5 L1.5 6.5 L6.5 11.5" fill="none" stroke="#606060" stroke-width="2"/></svg>
<svg class="a" style="left:1218px;top:405px;" width="8" height="13" viewBox="0 0 8 13"><path d="M1.5 1.5 L6.5 6.5 L1.5 11.5" fill="none" stroke="#606060" stroke-width="2"/></svg>
<div class="a" style="left:430px;top:171px;width:805px;height:231px;overflow:hidden">
<div class="a code" style="left:0px;top:27.20px"><span style="color:#008000">//<span class="cj">写</span><span class="cj">入</span><span class="cj">一</span><span class="cj">个</span><span class="cj">字</span><span class="cj">节</span></span></div>
<div class="a code" style="left:0px;top:43.42px">uint8_t ee_WRITE_BYTE(uint8_t w_addr , uint8_t data)</div>
<div class="a code" style="left:0px;top:59.64px">{</div>
<div class="a code" style="left:0px;top:75.86px">  i2c_START();</div>
<div class="a code" style="left:0px;top:108.30px">  <span style="color:#008000">//<span class="cj">发</span><span class="cj">送</span><span class="ca">EEPROM</span><span class="cj">设</span><span class="cj">备</span><span class="cj">地</span><span class="cj">址</span></span></div>
<div class="a code" style="left:0px;top:124.52px">  i2c_WRITE_BYTE(EEPROM_WRITE_DIR|EEPROM_ADDR);</div>
<div class="a code" style="left:0px;top:156.96px">  <span style="color:#0000ff">if</span>(i2c_WAIT()){</div>
<div class="a code" style="left:0px;top:173.18px">    <span style="color:#0000ff">goto</span> w_fail;</div>
<div class="a code" style="left:0px;top:189.40px">  }<span style="color:#0000ff">else</span><span style="background:#00ffff;color:#400000">{</span></div>
<div class="a code" style="left:0px;top:205.62px">    <span style="color:#008000">//<span class="cj">发</span><span class="cj">送</span><span class="cj">要</span><span class="cj">写</span><span class="cj">入</span><span class="cj">的</span><span class="cj">存</span><span class="cj">储</span><span class="cj">单</span><span class="cj">元</span><span class="cj">格</span><span class="cj">地</span><span class="cj">址</span></span></div>
<div class="a code" style="left:0px;top:221.84px">    i2c_WRITE_BYTE(w_addr);</div>
</div>
<div class="a lnum" style="left:340px;width:69px;top:181.11px">26</div>
<div class="a lnum" style="left:340px;width:69px;top:197.33px">27</div>
<div class="a lnum" style="left:340px;width:69px;top:213.55px">28</div>
<div class="a lnum" style="left:340px;width:69px;top:229.77px">29</div>
<div class="a lnum" style="left:340px;width:69px;top:245.99px">30</div>
<div class="a lnum" style="left:340px;width:69px;top:262.21px">31</div>
<div class="a lnum" style="left:340px;width:69px;top:278.43px">32</div>
<div class="a lnum" style="left:340px;width:69px;top:294.65px">33</div>
<div class="a lnum" style="left:340px;width:69px;top:310.87px">34</div>
<div class="a lnum" style="left:340px;width:69px;top:327.09px">35</div>
<div class="a lnum" style="left:340px;width:69px;top:343.31px">36</div>
<div class="a lnum" style="left:340px;width:69px;top:359.53px">37</div>
<div class="a lnum" style="left:340px;width:69px;top:375.75px">38</div>
<div class="a lnum" style="left:340px;width:69px;top:391.97px">39</div>
<svg class="a" style="left:412px;top:171px;" width="18" height="231" viewBox="0 0 18 231"><path d="M9.5 0 V10.5 H16" fill="none" stroke="#808080" stroke-width="1"/><rect x="4.5" y="52.1" width="10" height="10" fill="#fff" stroke="#8c8c8c"/><path d="M6.5 57.1 H12.5" stroke="#505050" stroke-width="1.2"/><rect x="4.5" y="149.4" width="10" height="10" fill="#fff" stroke="#8c8c8c"/><path d="M6.5 154.4 H12.5" stroke="#505050" stroke-width="1.2"/><path d="M9.5 62.1 V149.4 M9.5 159.4 V231" stroke="#808080" stroke-width="1"/></svg>
<div class="a" style="left:1px;top:429px;width:1260px;height:5px;background:#fff;"></div>
<div class="a" style="left:1px;top:434px;width:1260px;height:23px;background:linear-gradient(#c2cedb,#d3e0ee);"></div>
<svg class="a" style="left:1221px;top:441px;" width="10" height="12" viewBox="0 0 10 12"><path d="M2.5 0.8 H7.5" stroke="#000" stroke-width="1.4"/><rect x="2.6" y="1" width="4.8" height="5.5" fill="#fff" stroke="#000" stroke-width="1.2"/><rect x="5.2" y="1.5" width="1.6" height="5" fill="#000"/><path d="M0.8 7.3 H9.2" stroke="#000" stroke-width="1.6"/><path d="M5 7.5 V11" stroke="#000" stroke-width="1.5"/></svg>
<div class="a" style="left:1241px;top:439px;width:15px;height:15px;background:#c84b4b;"></div>
<svg class="a" style="left:1241px;top:439px;" width="15" height="15" viewBox="0 0 15 15"><path d="M4.6 4.6 L10.4 10.4 M10.4 4.6 L4.6 10.4" stroke="#fff" stroke-width="1.7"/></svg>
<div class="a" style="left:1px;top:457px;width:1260px;height:2px;background:#fff;"></div>
<div class="a" style="left:2px;top:459px;width:1259px;height:530px;background:#fff;"></div>
<div class="a" style="left:2px;top:459px;width:1259px;height:2px;background:#747474;"></div>
<div class="a" style="left:2px;top:459px;width:2px;height:529px;background:#747474;"></div>
<div class="a" style="left:1239px;top:461px;width:21px;height:507px;background:#f0f0f0;"></div>
<svg class="a" style="left:1243px;top:468px;" width="13" height="8" viewBox="0 0 13 8"><path d="M1.5 6.5 L6.5 1.5 L11.5 6.5" fill="none" stroke="#b8b8b8" stroke-width="2"/></svg>
<svg class="a" style="left:1243px;top:951px;" width="13" height="8" viewBox="0 0 13 8"><path d="M1.5 1.5 L6.5 6.5 L11.5 1.5" fill="none" stroke="#b8b8b8" stroke-width="2"/></svg>
<div class="a" style="left:4px;top:968px;width:1256px;height:21px;background:#f0f0f0;"></div>
<svg class="a" style="left:9px;top:973px;" width="8" height="13" viewBox="0 0 8 13"><path d="M6.5 1.5 L1.5 6.5 L6.5 11.5" fill="none" stroke="#b8b8b8" stroke-width="2"/></svg>
<svg class="a" style="left:1222px;top:972px;" width="8" height="13" viewBox="0 0 8 13"><path d="M1.5 1.5 L6.5 6.5 L1.5 11.5" fill="none" stroke="#b8b8b8" stroke-width="2"/></svg>
<div class="a bout" style="left:5.2px;top:473.46px">*** Using Compiler &#x27;V5.05 update 2 (build 169)&#x27;, folder: &#x27;C:\Keil_v5\ARM\ARMCC\Bin&#x27;</div>
<div class="a bout" style="left:5.2px;top:493.46px">Rebuild target &#x27;USART&#x27;</div>
<div class="a bout" style="left:5.2px;top:513.46px">FCARM - Output Name not specified, please check &#x27;Options for Target - Utilities&#x27;</div>
<div class="a bout" style="left:5.2px;top:533.46px">Target not created.</div>
<div class="a bout" style="left:5.2px;top:553.46px">Build Time Elapsed:  00:00:02</div>
<div class="a" style="left:1px;top:989px;width:1260px;height:1px;background:#fff;"></div>
<div class="a" style="left:1px;top:990px;width:1260px;height:24px;background:#f0f0f0;border-top:1px solid #e2e2e2"></div>
<div class="a" style="left:821px;top:993px;width:1px;height:20px;background:#d4d4d4;"></div>
<div class="a" style="left:1011px;top:993px;width:1px;height:20px;background:#d4d4d4;"></div>
<div class="a" style="left:1167px;top:993px;width:1px;height:20px;background:#d4d4d4;"></div>
<div class="a" style="left:1239px;top:993px;width:1px;height:20px;background:#d4d4d4;"></div>
<svg class="a" style="left:1246px;top:999px;" width="12" height="12" viewBox="0 0 12 12"><rect x="8" y="2" width="2" height="2" fill="#b8b8b8"/><rect x="5" y="5" width="2" height="2" fill="#b8b8b8"/><rect x="8" y="5" width="2" height="2" fill="#b8b8b8"/><rect x="2" y="8" width="2" height="2" fill="#b8b8b8"/><rect x="5" y="8" width="2" height="2" fill="#b8b8b8"/><rect x="8" y="8" width="2" height="2" fill="#b8b8b8"/></svg>
<div class="a t" style="left:36.30px;top:21.00px;font-family:'Liberation Sans';font-size:15.3px;font-weight:400;letter-spacing:0.470px;color:#000;">C:\Users\noahpc\Desktop\读写I2C\Project\RVMDK  (uv5)  \BH-F103.uvprojx - µVision</div>
<div class="a t" style="left:12.70px;top:54.10px;font-family:'Liberation Sans';font-size:15.0px;font-weight:400;letter-spacing:-0.200px;color:#000;transform:scaleX(0.8936);transform-origin:0 0;">File</div>
<div class="a t" style="left:54.00px;top:54.10px;font-family:'Liberation Sans';font-size:15.0px;font-weight:400;letter-spacing:-0.200px;color:#000;transform:scaleX(0.9242);transform-origin:0 0;">Edit</div>
<div class="a t" style="left:97.60px;top:54.10px;font-family:'Liberation Sans';font-size:15.0px;font-weight:400;letter-spacing:-0.200px;color:#000;transform:scaleX(0.9860);transform-origin:0 0;">View</div>
<div class="a t" style="left:147.60px;top:54.10px;font-family:'Liberation Sans';font-size:15.0px;font-weight:400;letter-spacing:-0.200px;color:#000;transform:scaleX(0.9382);transform-origin:0 0;">Project</div>
<div class="a t" style="left:210.40px;top:54.10px;font-family:'Liberation Sans';font-size:15.0px;font-weight:400;letter-spacing:-0.200px;color:#000;transform:scaleX(0.8995);transform-origin:0 0;">Flash</div>
<div class="a t" style="left:262.40px;top:54.10px;font-family:'Liberation Sans';font-size:15.0px;font-weight:400;letter-spacing:-0.200px;color:#000;transform:scaleX(0.9931);transform-origin:0 0;">Debug</div>
<div class="a t" style="left:325.20px;top:54.10px;font-family:'Liberation Sans';font-size:15.0px;font-weight:400;letter-spacing:-0.200px;color:#000;transform:scaleX(0.9555);transform-origin:0 0;">Peripherals</div>
<div class="a t" style="left:415.20px;top:54.10px;font-family:'Liberation Sans';font-size:15.0px;font-weight:400;letter-spacing:-0.200px;color:#000;transform:scaleX(0.9277);transform-origin:0 0;">Tools</div>
<div class="a t" style="left:467.20px;top:54.10px;font-family:'Liberation Sans';font-size:15.0px;font-weight:400;letter-spacing:-0.200px;color:#000;transform:scaleX(0.8101);transform-origin:0 0;">SVCS</div>
<div class="a t" style="left:518.40px;top:54.10px;font-family:'Liberation Sans';font-size:15.0px;font-weight:400;letter-spacing:0.388px;color:#000;">Window</div>
<div class="a t" style="left:592.70px;top:54.10px;font-family:'Liberation Sans';font-size:15.0px;font-weight:400;letter-spacing:-0.200px;color:#000;transform:scaleX(0.9495);transform-origin:0 0;">Help</div>
<div class="a t" style="left:224.40px;top:121.10px;font-family:'Liberation Sans';font-size:15.0px;font-weight:400;letter-spacing:-0.200px;color:#000;transform:scaleX(0.8166);transform-origin:0 0;">USART</div>
<div class="a t" style="left:6.20px;top:151.17px;font-family:'Liberation Sans';font-size:14.5px;font-weight:400;letter-spacing:0.041px;color:#000;">Functions</div>
<div class="a t" style="left:62.80px;top:181.08px;font-family:'Liberation Sans';font-size:16.5px;font-weight:400;letter-spacing:-0.200px;color:#000;transform:scaleX(0.9739);transform-origin:0 0;">bsp_i2c_gpio.c</div>
<div class="a t" style="left:62.80px;top:206.08px;font-family:'Liberation Sans';font-size:16.5px;font-weight:400;letter-spacing:-0.200px;color:#000;transform:scaleX(0.9768);transform-origin:0 0;">bsp_led.c</div>
<div class="a t" style="left:62.80px;top:231.08px;font-family:'Liberation Sans';font-size:16.5px;font-weight:400;letter-spacing:-0.200px;color:#000;transform:scaleX(0.9719);transform-origin:0 0;">bsp_usart.c</div>
<div class="a t" style="left:62.80px;top:256.08px;font-family:'Liberation Sans';font-size:16.5px;font-weight:400;letter-spacing:-0.200px;color:#000;transform:scaleX(0.9510);transform-origin:0 0;">core_cm3.c</div>
<div class="a t" style="left:62.80px;top:281.08px;font-family:'Liberation Sans';font-size:16.5px;font-weight:400;letter-spacing:-0.200px;color:#000;transform:scaleX(0.9587);transform-origin:0 0;">main.c</div>
<div class="a t" style="left:62.80px;top:306.08px;font-family:'Liberation Sans';font-size:16.5px;font-weight:400;letter-spacing:-0.200px;color:#000;transform:scaleX(0.9326);transform-origin:0 0;">misc.c</div>
<div class="a t" style="left:62.80px;top:331.08px;font-family:'Liberation Sans';font-size:16.5px;font-weight:400;letter-spacing:-0.200px;color:#000;transform:scaleX(0.9588);transform-origin:0 0;">stm32f10x_adc.c</div>
<div class="a t" style="left:62.80px;top:356.08px;font-family:'Liberation Sans';font-size:16.5px;font-weight:400;letter-spacing:-0.200px;color:#000;transform:scaleX(0.9805);transform-origin:0 0;">stm32f10x_bkp.c</div>
<div class="a t" style="left:62.80px;top:381.08px;font-family:'Liberation Sans';font-size:16.5px;font-weight:400;letter-spacing:-0.200px;color:#000;transform:scaleX(0.9516);transform-origin:0 0;">stm32f10x_can.c</div>
<div class="a t" style="left:31.70px;top:413.97px;font-family:'Liberation Sans';font-size:14.5px;font-weight:400;letter-spacing:-0.200px;color:#7c7c7c;transform:scaleX(0.9747);transform-origin:0 0;">Project</div>
<div class="a t" style="left:92.70px;top:414.60px;font-family:'Liberation Sans';font-size:15px;font-weight:400;letter-spacing:-0.200px;color:#000;transform:scaleX(0.9586);transform-origin:0 0;">{ }</div>
<div class="a t" style="left:111.70px;top:414.77px;font-family:'Liberation Sans';font-size:14.5px;font-weight:400;letter-spacing:-0.034px;color:#000;">Functions</div>
<div class="a t" style="left:398.10px;top:154.52px;font-family:'Liberation Sans';font-size:13.5px;font-weight:400;letter-spacing:0.363px;color:#000;">bsp_i2c_gpio.c</div>
<div class="a t" style="left:545.30px;top:154.52px;font-family:'Liberation Sans';font-size:13.5px;font-weight:400;letter-spacing:0.227px;color:#000;">main.c</div>
<div class="a t" style="left:640.00px;top:154.52px;font-family:'Liberation Sans';font-size:13.5px;font-weight:400;letter-spacing:-0.084px;color:#000;">bsp_i2c_ee.h</div>
<div class="a t" style="left:773.90px;top:154.52px;font-family:'Liberation Sans';font-size:13.5px;font-weight:700;letter-spacing:-0.200px;color:#000;transform:scaleX(0.9612);transform-origin:0 0;">bsp_i2c_ee.c</div>
<div class="a t" style="left:905.40px;top:154.52px;font-family:'Liberation Sans';font-size:13.5px;font-weight:400;letter-spacing:0.398px;color:#000;">bsp_i2c_gpio.h</div>
<div class="a t" style="left:6.30px;top:447.27px;font-family:'Liberation Sans';font-size:14.5px;font-weight:400;letter-spacing:0.408px;color:#000;">Build Output</div>
<div class="a t" style="left:827.70px;top:1005.17px;font-family:'Liberation Sans';font-size:14.5px;font-weight:400;letter-spacing:-0.200px;color:#000;transform:scaleX(0.9626);transform-origin:0 0;">CMSIS-DAP Debugger</div>
<div class="a t" style="left:1173.70px;top:1005.17px;font-family:'Liberation Sans';font-size:14.5px;font-weight:400;letter-spacing:-0.200px;color:#000;transform:scaleX(0.9101);transform-origin:0 0;">L:50 C:4</div>
<div class="a" style="left:0;top:0;width:1262px;height:1015px;border:1px solid #0a78d4;pointer-events:none"></div>
</body></html>
